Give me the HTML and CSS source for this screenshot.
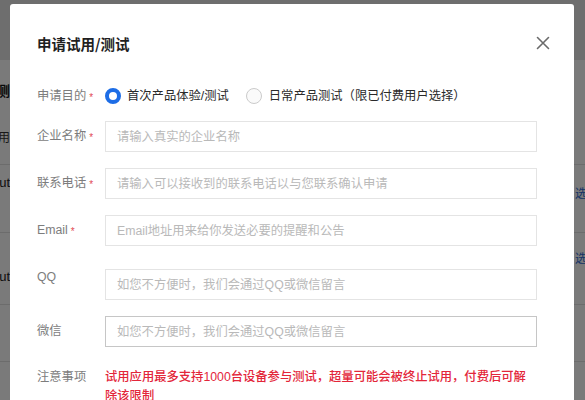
FILE: index.html
```html
<!DOCTYPE html>
<html lang="zh-CN">
<head>
<meta charset="utf-8">
<title>申请试用/测试</title>
<link rel="stylesheet" href="styles.css">
</head>
<body>
<div class="page">
  <div class="bg-header"></div>
  <div class="bg-row bg-row-1">
    <div class="bg-left">
      <span class="bg-strong">观测</span>
      <span class="bg-sub">试用</span>
    </div>
  </div>
  <div class="bg-row bg-row-2">
    <div class="bg-left"><span class="bg-text">Output</span></div>
    <div class="bg-right"><span class="bg-link">选择</span></div>
  </div>
  <div class="bg-row bg-row-3">
    <div class="bg-left bg-left-low"><span class="bg-text">Output</span></div>
    <div class="bg-right"><span class="bg-link">选择</span></div>
  </div>
  <div class="bg-row bg-row-4"></div>
  <div class="bg-row bg-row-5"></div>
</div>

<div class="overlay"></div>

<div class="modal">
  <div class="modal-header">
    <h2 class="modal-title">申请试用/测试</h2>
    <span class="modal-close" aria-label="关闭">
      <svg width="14" height="14" viewBox="0 0 14 14"><path d="M1.5 1.5 L12.5 12.5 M12.5 1.5 L1.5 12.5" stroke="#6b6b6b" stroke-width="1.6" fill="none" stroke-linecap="round"/></svg>
    </span>
  </div>
  <form class="form">
    <div class="row row-radio">
      <label class="label">申请目的<span class="req">*</span></label>
      <div class="radios">
        <span class="radio radio-on"></span>
        <span class="radio-text">首次产品体验/测试</span>
        <span class="radio radio-off"></span>
        <span class="radio-text">日常产品测试（限已付费用户选择）</span>
      </div>
    </div>
    <div class="row">
      <label class="label">企业名称<span class="req">*</span></label>
      <input class="input" type="text" placeholder="请输入真实的企业名称">
    </div>
    <div class="row">
      <label class="label">联系电话<span class="req">*</span></label>
      <input class="input" type="text" placeholder="请输入可以接收到的联系电话以与您联系确认申请">
    </div>
    <div class="row">
      <label class="label">Email<span class="req">*</span></label>
      <input class="input" type="text" placeholder="Email地址用来给你发送必要的提醒和公告">
    </div>
    <div class="row row-top row-qq">
      <label class="label">QQ</label>
      <input class="input" type="text" placeholder="如您不方便时，我们会通过QQ或微信留言">
    </div>
    <div class="row">
      <label class="label">微信</label>
      <input class="input input-hover" type="text" placeholder="如您不方便时，我们会通过QQ或微信留言">
    </div>
    <div class="row row-top row-note">
      <label class="label label-note">注意事项</label>
      <p class="note">试用应用最多支持1000台设备参与测试，超量可能会被终止试用，付费后可解除该限制</p>
    </div>
  </form>
</div>
</body>
</html>
```

FILE: styles.css
```css
* { box-sizing: border-box; }

html, body {
  margin: 0;
  padding: 0;
}

body {
  width: 585px;
  height: 400px;
  overflow: hidden;
  position: relative;
  font-family: "Liberation Sans", "Noto Sans CJK SC", sans-serif;
  background: #ffffff;
}

/* ---------- background page ---------- */
.page {
  display: flex;
  flex-direction: column;
  width: 585px;
}

.bg-header {
  height: 60px;
  background: #e6e6e6;
}

.bg-row {
  display: flex;
  justify-content: space-between;
  border-bottom: 1px solid #e2e2e2;
}

.bg-row-1 { height: 105px; }
.bg-row-2 { height: 68px; }
.bg-row-3 { height: 72px; }
.bg-row-4 { height: 57px; }
.bg-row-5 { height: 80px; }

.bg-left {
  display: flex;
  flex-direction: column;
  align-items: flex-end;
  width: 40px;
  margin-left: -30px;
}

.bg-strong {
  font-family: "Noto Sans CJK SC", sans-serif;
  font-weight: 700;
  font-size: 14px;
  color: #111;
  margin-top: 20px;
  line-height: 20px;
}

.bg-sub {
  font-family: "Noto Sans CJK SC", sans-serif;
  font-size: 12px;
  color: #333;
  margin-top: 27px;
  line-height: 20px;
}

.bg-text {
  font-size: 13px;
  color: #222;
  margin-top: 8px;
  line-height: 20px;
}

.bg-left-low .bg-text { margin-top: 34px; }

.bg-right {
  width: 40px;
  margin-right: -30px;
}

.bg-link {
  font-family: "Noto Sans CJK SC", sans-serif;
  font-size: 12px;
  color: #2f6bd6;
  line-height: 20px;
  display: block;
  margin-top: 18px;
}

.bg-row-3 .bg-link { margin-top: 15px; }

/* ---------- overlay + modal ---------- */
.overlay {
  position: absolute;
  inset: 0;
  background: rgba(0, 0, 0, 0.52);
}

.modal {
  position: absolute;
  left: 10px;
  top: 4px;
  width: 564px;
  height: 440px;
  background: #ffffff;
  border-radius: 3px;
  padding: 30px 37px 0 27px;
}

.modal-header {
  display: flex;
  justify-content: space-between;
  align-items: center;
  height: 20px;
}

.modal-title {
  margin: 0;
  font-family: "Noto Sans CJK SC", sans-serif;
  font-size: 14.5px;
  font-weight: 700;
  color: #1f1f1f;
  line-height: 20px;
}

.modal-close {
  display: flex;
  width: 14px;
  height: 14px;
  margin-right: -13px;
  margin-top: -2px;
}

/* ---------- form ---------- */
.form {
  display: flex;
  flex-direction: column;
  gap: 16px;
  margin-top: 32px;
  font-size: 12.3px;
}

.row {
  display: flex;
  align-items: center;
}

.row-top { align-items: flex-start; }

.row-radio {
  height: 20px;
  margin-bottom: -1px;
}

.row-qq { margin-top: 7px; }
.row-qq .label { line-height: 16px; }

.row-note { margin-top: 5px; }

.label {
  width: 68px;
  flex: none;
  color: #7d7d7d;
  line-height: 19px;
}

.req {
  color: #e24a55;
  font-size: 10px;
  margin-left: 3px;
  position: relative;
  top: 1px;
}

.radios {
  display: flex;
  align-items: center;
  color: #2a2a2a;
}

.radio {
  width: 16px;
  height: 16px;
  border-radius: 50%;
  flex: none;
}

.radio-on {
  border: 4px solid #1d6de6;
  background: #fff;
}

.radio-off {
  border: 1px solid #cbcbcb;
  background: #fafafa;
  margin-left: 17px;
}

.radio-text {
  margin-left: 6px;
  line-height: 19px;
}

.radio-off + .radio-text { margin-left: 7px; }

.input {
  flex: 1;
  height: 31px;
  border: 1px solid #e4e4e4;
  border-radius: 0;
  padding: 0 11px;
  font-family: "Liberation Sans", "Noto Sans CJK SC", sans-serif;
  font-size: 12.3px;
  color: #333;
  background: #fff;
  outline: none;
}

.input::placeholder { color: #b9b9b9; }

.input-hover { border-color: #c6c6c6; }

.note {
  margin: 0;
  width: 426px;
  font-family: "Liberation Sans", "Noto Sans CJK SC", sans-serif;
  font-weight: 500;
  color: #e3263a;
  line-height: 19px;
}
```
